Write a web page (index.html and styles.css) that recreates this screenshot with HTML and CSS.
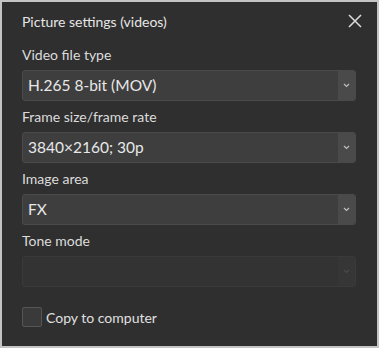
FILE: index.html
```html
<!DOCTYPE html>
<html>
<head>
  <link rel="stylesheet" href="styles.css">
</head>
<body>
  <div class="dialog">
    <div class="dialog-head">
      <span class="dialog-title">Picture settings (videos)</span>
      <button class="close-btn" aria-label="Close">
        <svg width="14" height="14" viewBox="0 0 14 14"><path d="M1 1L13 13M13 1L1 13" stroke="#d8d8d8" stroke-width="1.6" fill="none"/></svg>
      </button>
    </div>

    <div class="field">
      <label class="field-label">Video file type</label>
      <div class="select">
        <span class="select-value">H.265 8-bit (MOV)</span>
        <span class="select-arrow"><svg width="7" height="5" viewBox="0 0 7 5"><path d="M1 1L3.5 3.5L6 1" stroke="#bdbdbd" stroke-width="1.2" fill="none"/></svg></span>
      </div>
    </div>

    <div class="field">
      <label class="field-label">Frame size/frame rate</label>
      <div class="select">
        <span class="select-value">3840×2160; 30p</span>
        <span class="select-arrow"><svg width="7" height="5" viewBox="0 0 7 5"><path d="M1 1L3.5 3.5L6 1" stroke="#bdbdbd" stroke-width="1.2" fill="none"/></svg></span>
      </div>
    </div>

    <div class="field">
      <label class="field-label">Image area</label>
      <div class="select">
        <span class="select-value">FX</span>
        <span class="select-arrow"><svg width="7" height="5" viewBox="0 0 7 5"><path d="M1 1L3.5 3.5L6 1" stroke="#bdbdbd" stroke-width="1.2" fill="none"/></svg></span>
      </div>
    </div>

    <div class="field">
      <label class="field-label">Tone mode</label>
      <div class="select disabled">
        <span class="select-value"></span>
        <span class="select-arrow"><svg width="7" height="5" viewBox="0 0 7 5"><path d="M1 1L3.5 3.5L6 1" stroke="#4a4a4a" stroke-width="1.2" fill="none"/></svg></span>
      </div>
    </div>

    <label class="check-row">
      <span class="checkbox"></span>
      <span class="check-text">Copy to computer</span>
    </label>
  </div>
</body>
</html>
```

FILE: styles.css
```css
body {
  margin: 0;
  font-family: Lato, 'Noto Sans', sans-serif;
  background: #c4c4c4;
}
.dialog {
  box-sizing: border-box;
  width: 379px;
  height: 348px;
  border: 2px solid #c4c4c4;
  background: #2f2f2f;
  padding: 0 21px 0 20px;
  color: #dcdcdc;
}
.dialog-head {
  display: flex;
  justify-content: space-between;
  align-items: center;
  height: 36px;
  padding-top: 1px;
}
.dialog-title {
  font-size: 14px;
  color: #e6e6e6;
}
.close-btn {
  background: none;
  border: 0;
  padding: 0;
  margin-right: -6px;
  display: flex;
  cursor: pointer;
}
.field {
  margin-top: 3px;
}
.field-label {
  display: block;
  font-size: 14px;
  line-height: 20px;
  padding-top: 3px;
  margin-bottom: 5px;
  color: #dcdcdc;
}
.select {
  display: flex;
  height: 31px;
  box-sizing: border-box;
  border: 1px solid #4a4a4a;
  border-radius: 3px;
  background: #3e3e3e;
  overflow: hidden;
}
.select-value {
  flex: 1;
  padding-left: 5px;
  font-size: 15.5px;
  line-height: 29px;
  color: #e8e8e8;
}
.select-arrow {
  width: 17px;
  background: #4a4a4a;
  display: flex;
  align-items: center;
  justify-content: center;
}
.select.disabled {
  background: #333333;
  border-color: #3a3a3a;
}
.select.disabled .select-arrow {
  background: #363636;
}
.check-row {
  display: flex;
  align-items: center;
  gap: 4px;
  margin-top: 20px;
  font-size: 14px;
}
.checkbox {
  width: 20px;
  height: 20px;
  box-sizing: border-box;
  border: 1px solid #555555;
  border-radius: 2px;
  background: #3a3a3a;
}
.check-text {
  color: #e0e0e0;
}
```
